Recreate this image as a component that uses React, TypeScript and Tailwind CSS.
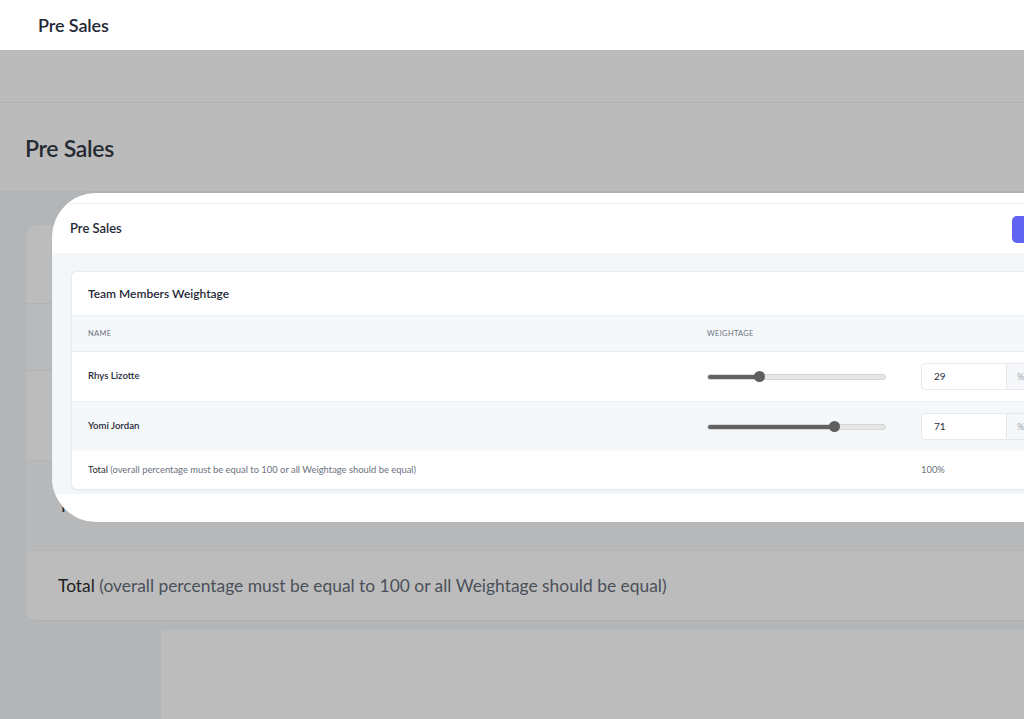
import React from "react";

function Slider({ value }: { value: number }) {
  return (
    <div className="relative w-[179px] h-[11px] flex items-center">
      <div className="w-full h-[6px] rounded-full bg-[#e6e6e6] border border-[#d6d6d6] overflow-hidden">
        <div className="h-full bg-[#626262]" style={{ width: `${value}%` }} />
      </div>
      <div
        className="absolute top-0 w-[11px] h-[11px] rounded-full bg-[#5e5e5e] -ml-[5px]"
        style={{ left: `${value}%` }}
      />
    </div>
  );
}

function PctInput({ value }: { value: number }) {
  return (
    <div className="flex h-[27px] w-[120px] rounded-[4px] border border-[#e5e9ee] overflow-hidden bg-white">
      <div className="w-[85px] flex items-center pl-[12px] text-[10px] text-[#1f2937] border-r border-[#e5e9ee]">
        {value}
      </div>
      <div className="flex-1 bg-[#f5f7fa] flex items-center pl-[10px] text-[9px] text-[#9ca3af]">%</div>
    </div>
  );
}

export default function App() {
  const font = { fontFamily: "Lato, 'Noto Sans', sans-serif" };
  return (
    <div className="relative w-[1024px] h-[719px] overflow-hidden bg-[#b3b6b9]" style={font}>
      {/* top bar */}
      <div className="h-[50px] bg-white flex items-center pl-[38px]">
        <span className="text-[18px] font-semibold text-[#1f2937] tracking-[-0.1px]">Pre Sales</span>
      </div>
      {/* dim bands */}
      <div className="h-[53px] bg-[#bbbbbb] border-b border-[#b2b2b2]" />
      <div className="h-[89px] bg-[#bbbbbb] border-b border-[#b3b3b3] flex items-center pl-[25px] pt-[3px]">
        <span className="text-[23px] font-semibold text-[#262b33] tracking-[-0.3px]">Pre Sales</span>
      </div>
      {/* background card */}
      <div className="pl-[26px] pt-[33px]">
        <div className="bg-[#bcbcbc] rounded-tl-[10px] rounded-bl-[10px] border-b border-[#afafaf]">
          <div className="h-[79px] border-b border-[#b3b3b3]" />
          <div className="h-[67px] border-b border-[#b3b3b3] bg-[#b9babb]" />
          <div className="h-[90px] border-b border-[#b3b3b3]" />
          <div className="h-[90px] border-b border-[#b3b3b3] bg-[#b8b9ba] flex items-center pl-[32px] text-[17px] font-medium text-[#262b33]">
            Yomi Jordan
          </div>
          <div className="h-[69px] flex items-center pl-[32px] pt-[2px] text-[17.4px] text-[#4a5059]">
            <span className="text-[#1e1e1e]">Total</span>
            <span>&nbsp;(overall percentage must be equal to 100 or all Weightage should be equal)</span>
          </div>
        </div>
      </div>
      {/* bottom region */}
      <div className="flex pt-[9px] h-[120px]">
        <div className="w-[161px]" />
        <div className="flex-1 bg-[#bcbcbc]" />
      </div>

      {/* magnified overlay */}
      <div className="absolute left-[52px] top-[193px] w-[1058px] h-[329px] bg-white rounded-l-[44px] shadow-[0_0_3px_rgba(0,0,0,0.04)] overflow-hidden flex flex-col">
        <div className="h-[10px]" />
        <div className="border-t border-[#eef1f4] h-[50px] flex items-center justify-between pl-[18px] pr-[18px] pt-[1px]">
          <span className="text-[13px] font-semibold text-[#1f2937]">Pre Sales</span>
          <div className="w-[80px] h-[27px] rounded-[5px] bg-[#6062f2]" />
        </div>
        <div className="bg-[#f4f7fa] pt-[18px] pb-[4px] pl-[19px]">
          <div className="bg-white rounded-l-[6px] border border-r-0 border-[#e8ecf0] shadow-[0_1px_2px_rgba(0,0,0,0.04)]">
            <div className="h-[44px] border-b border-[#eef1f4] flex items-center pl-[16px]">
              <span className="text-[12px] font-semibold text-[#1f2937]">Team Members Weightage</span>
            </div>
            <div className="h-[36px] bg-[#f5f8fa] border-b border-[#e8ecf0] flex items-center text-[7.5px] uppercase tracking-[0.3px] text-[#6b7280]">
              <div className="w-[635px] pl-[16px]">Name</div>
              <div>Weightage</div>
            </div>
            <div className="h-[50px] border-b border-[#f0f3f6] flex items-center">
              <div className="w-[635px] pl-[16px] text-[9.6px] font-semibold text-[#1f2937]">Rhys Lizotte</div>
              <div className="w-[214px]">
                <Slider value={29} />
              </div>
              <PctInput value={29} />
            </div>
            <div className="h-[49px] bg-[#f5f8fa] flex items-center">
              <div className="w-[635px] pl-[16px] text-[9.6px] font-semibold text-[#1f2937]">Yomi Jordan</div>
              <div className="w-[214px]">
                <Slider value={71} />
              </div>
              <PctInput value={71} />
            </div>
            <div className="h-[38px] flex items-center text-[9.4px] text-[#6b7280]">
              <div className="w-[849px] pl-[16px]">
                <span className="text-[#1f2937]">Total</span> (overall percentage must be equal to 100 or all Weightage should be equal)
              </div>
              <div>100%</div>
            </div>
          </div>
        </div>
      </div>
    </div>
  );
}
